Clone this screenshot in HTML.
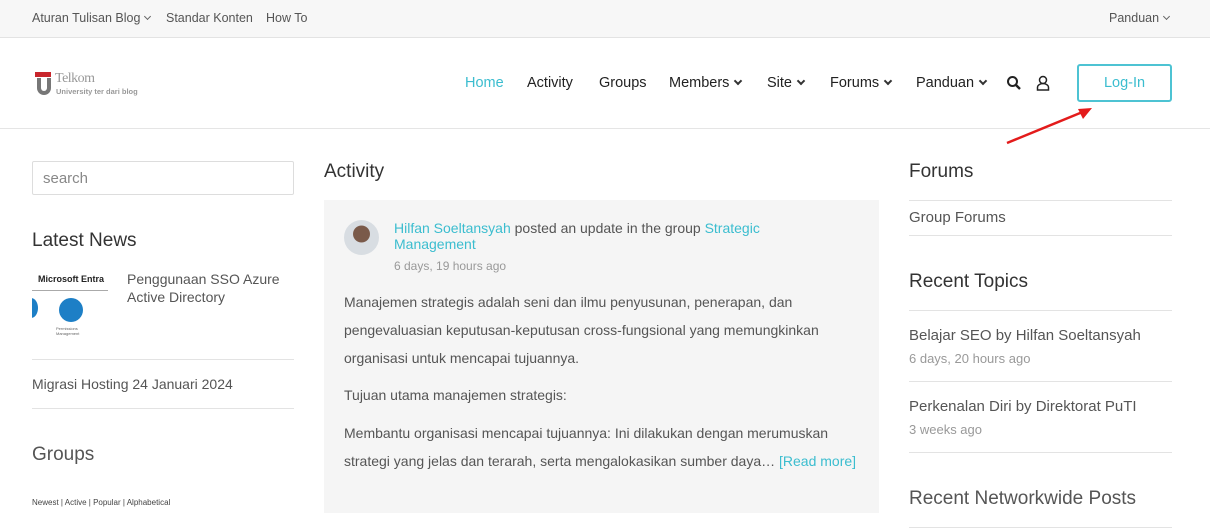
<!DOCTYPE html>
<html><head><meta charset="utf-8"><style>
*{margin:0;padding:0;box-sizing:border-box}
body{width:1210px;height:530px;overflow:hidden;background:#fff;font-family:"Liberation Sans",sans-serif;color:#333;position:relative}
.a{position:absolute;white-space:nowrap}
.top{position:absolute;left:0;top:0;width:1210px;height:38px;background:#f7f7f7;border-bottom:1px solid #e3e3e3}
.top span{position:absolute;top:11px;font-size:12.5px;color:#555}
.hdr{position:absolute;left:0;top:38px;width:1210px;height:91px;border-bottom:1px solid #e5e5e5}
.nav{position:absolute;top:75px;font-size:14.5px;color:#222}
.chev{display:inline-block;width:6px;height:6px;border-right:2px solid #333;border-bottom:2px solid #333;transform:rotate(45deg);margin-left:6px;position:relative;top:-3px}
.tchev{display:inline-block;width:5px;height:5px;border-right:1.5px solid #666;border-bottom:1.5px solid #666;transform:rotate(45deg);margin-left:5px;position:relative;top:-3px}
.line{position:absolute;height:1px;background:#e3e3e3}
.h{font-size:19px;color:#333}
.p{font-size:14px;color:#555}
</style></head><body>
<div class="top">
<span style="left:32px">Aturan Tulisan Blog<i class="tchev"></i></span>
<span style="left:166px">Standar Konten</span>
<span style="left:266px">How To</span>
<span style="left:1109px">Panduan<i class="tchev"></i></span>
</div>
<div class="hdr"></div>
<!-- logo -->
<div class="a" style="left:35px;top:72px;width:16px;height:5px;background:#c8262c"></div>
<div class="a" style="left:37px;top:78px;width:14px;height:17px;border:4px solid #777;border-top:none;border-radius:0 0 7px 7px"></div>
<div class="a" style="left:55px;top:71px;font-size:14px;color:#999;font-family:'Liberation Serif',serif;letter-spacing:-0.5px">Telkom</div>
<div class="a" style="left:56px;top:87px;font-size:7.5px;color:#999;font-weight:bold">University ter dari blog</div>

<div class="nav" style="left:465px;color:#3bbdcf">Home</div>
<div class="nav" style="left:527px">Activity</div>
<div class="nav" style="left:599px">Groups</div>
<div class="nav" style="left:669px">Members<i class="chev"></i></div>
<div class="nav" style="left:767px">Site<i class="chev"></i></div>
<div class="nav" style="left:830px">Forums<i class="chev"></i></div>
<div class="nav" style="left:916px">Panduan<i class="chev"></i></div>
<svg class="a" style="left:1006px;top:75px" width="16" height="16" viewBox="0 0 16 16"><circle cx="6.5" cy="6.5" r="4.5" fill="none" stroke="#222" stroke-width="2"/><path d="M10 10l4 4" stroke="#222" stroke-width="2.4"/></svg>
<svg class="a" style="left:1036px;top:75px" width="14" height="16" viewBox="0 0 14 16"><circle cx="7" cy="5" r="3.5" fill="none" stroke="#222" stroke-width="1.5"/><path d="M1.5 15v-2.5a5.5 4 0 0 1 11 0V15z" fill="none" stroke="#222" stroke-width="1.5"/></svg>
<div class="a" style="left:1077px;top:64px;width:95px;height:38px;border:2px solid #4dc3d3;border-radius:3px;color:#3bbdcf;font-size:14.5px;text-align:center;line-height:34px">Log-In</div>
<svg class="a" style="left:1000px;top:100px" width="100" height="50"><path d="M7 43L85 11" stroke="#e31b1b" stroke-width="2.5"/><path d="M92 8L78 9L83 19z" fill="#e31b1b"/></svg>

<!-- left -->
<div class="a" style="left:32px;top:161px;width:262px;height:34px;border:1px solid #ddd;border-radius:2px;font-size:15px;color:#888;padding:8px 10px">search</div>
<div class="a h" style="left:32px;top:230px">Latest News</div>
<div class="a" style="left:32px;top:268px;width:76px;height:72px;background:#fff;overflow:hidden">
<div style="position:absolute;left:6px;top:6px;font-size:9px;font-weight:bold;color:#222">Microsoft Entra</div>
<div style="position:absolute;left:0;top:22px;width:76px;height:1px;background:#aaa"></div>
<div style="position:absolute;left:-8px;top:30px;width:14px;height:20px;border-radius:50%;background:#1d7fc6"></div>
<div style="position:absolute;left:27px;top:30px;width:24px;height:24px;border-radius:50%;background:#1d7fc6"></div>
<div style="position:absolute;left:24px;top:58px;font-size:4px;color:#666">Permissions<br>Management</div>
</div>
<div class="a p" style="left:127px;top:270px;line-height:18px;white-space:normal;width:170px">Penggunaan SSO Azure Active Directory</div>
<div class="line" style="left:32px;top:359px;width:262px"></div>
<div class="a p" style="left:32px;top:376px">Migrasi Hosting 24 Januari 2024</div>
<div class="line" style="left:32px;top:408px;width:262px"></div>
<div class="a h" style="left:32px;top:444px;color:#555">Groups</div>
<div class="a" style="left:32px;top:498px;font-size:8px;color:#444">Newest | Active | Popular | Alphabetical</div>

<!-- middle -->
<div class="a h" style="left:324px;top:161px">Activity</div>
<div class="a" style="left:324px;top:200px;width:555px;height:313px;background:#f5f5f5"></div>
<div class="a" style="left:344px;top:220px;width:35px;height:35px;border-radius:50%;background:radial-gradient(circle at 50% 40%,#7a5a4a 0 30%,#d8dde2 32%)"></div>
<div class="a" style="left:394px;top:220px;font-size:14px;line-height:16px;color:#555"><span style="color:#3bbdcf">Hilfan Soeltansyah</span> posted an update in the group <span style="color:#3bbdcf">Strategic</span><br><span style="color:#3bbdcf">Management</span></div>
<div class="a" style="left:394px;top:259px;font-size:12px;color:#999">6 days, 19 hours ago</div>
<div class="a" style="left:344px;top:288px;font-size:14px;color:#555;line-height:28px">Manajemen strategis adalah seni dan ilmu penyusunan, penerapan, dan<br>pengevaluasian keputusan-keputusan cross-fungsional yang memungkinkan<br>organisasi untuk mencapai tujuannya.</div>
<div class="a" style="left:344px;top:381px;font-size:14px;color:#555;line-height:28px">Tujuan utama manajemen strategis:</div>
<div class="a" style="left:344px;top:419px;font-size:14px;color:#555;line-height:28px">Membantu organisasi mencapai tujuannya: Ini dilakukan dengan merumuskan<br>strategi yang jelas dan terarah, serta mengalokasikan sumber daya… <span style="color:#3bbdcf">[Read more]</span></div>

<!-- right -->
<div class="a h" style="left:909px;top:161px">Forums</div>
<div class="line" style="left:909px;top:200px;width:263px"></div>
<div class="a p" style="left:909px;top:209px;font-size:15px">Group Forums</div>
<div class="line" style="left:909px;top:235px;width:263px"></div>
<div class="a h" style="left:909px;top:271px">Recent Topics</div>
<div class="line" style="left:909px;top:310px;width:263px"></div>
<div class="a p" style="left:909px;top:327px;font-size:15px">Belajar SEO by Hilfan Soeltansyah</div>
<div class="a" style="left:909px;top:351px;font-size:13px;color:#999">6 days, 20 hours ago</div>
<div class="line" style="left:909px;top:381px;width:263px"></div>
<div class="a p" style="left:909px;top:398px;font-size:15px">Perkenalan Diri by Direktorat PuTI</div>
<div class="a" style="left:909px;top:422px;font-size:13px;color:#999">3 weeks ago</div>
<div class="line" style="left:909px;top:452px;width:263px"></div>
<div class="a h" style="left:909px;top:488px;color:#555">Recent Networkwide Posts</div>
<div class="line" style="left:909px;top:527px;width:263px"></div>
</body></html>
